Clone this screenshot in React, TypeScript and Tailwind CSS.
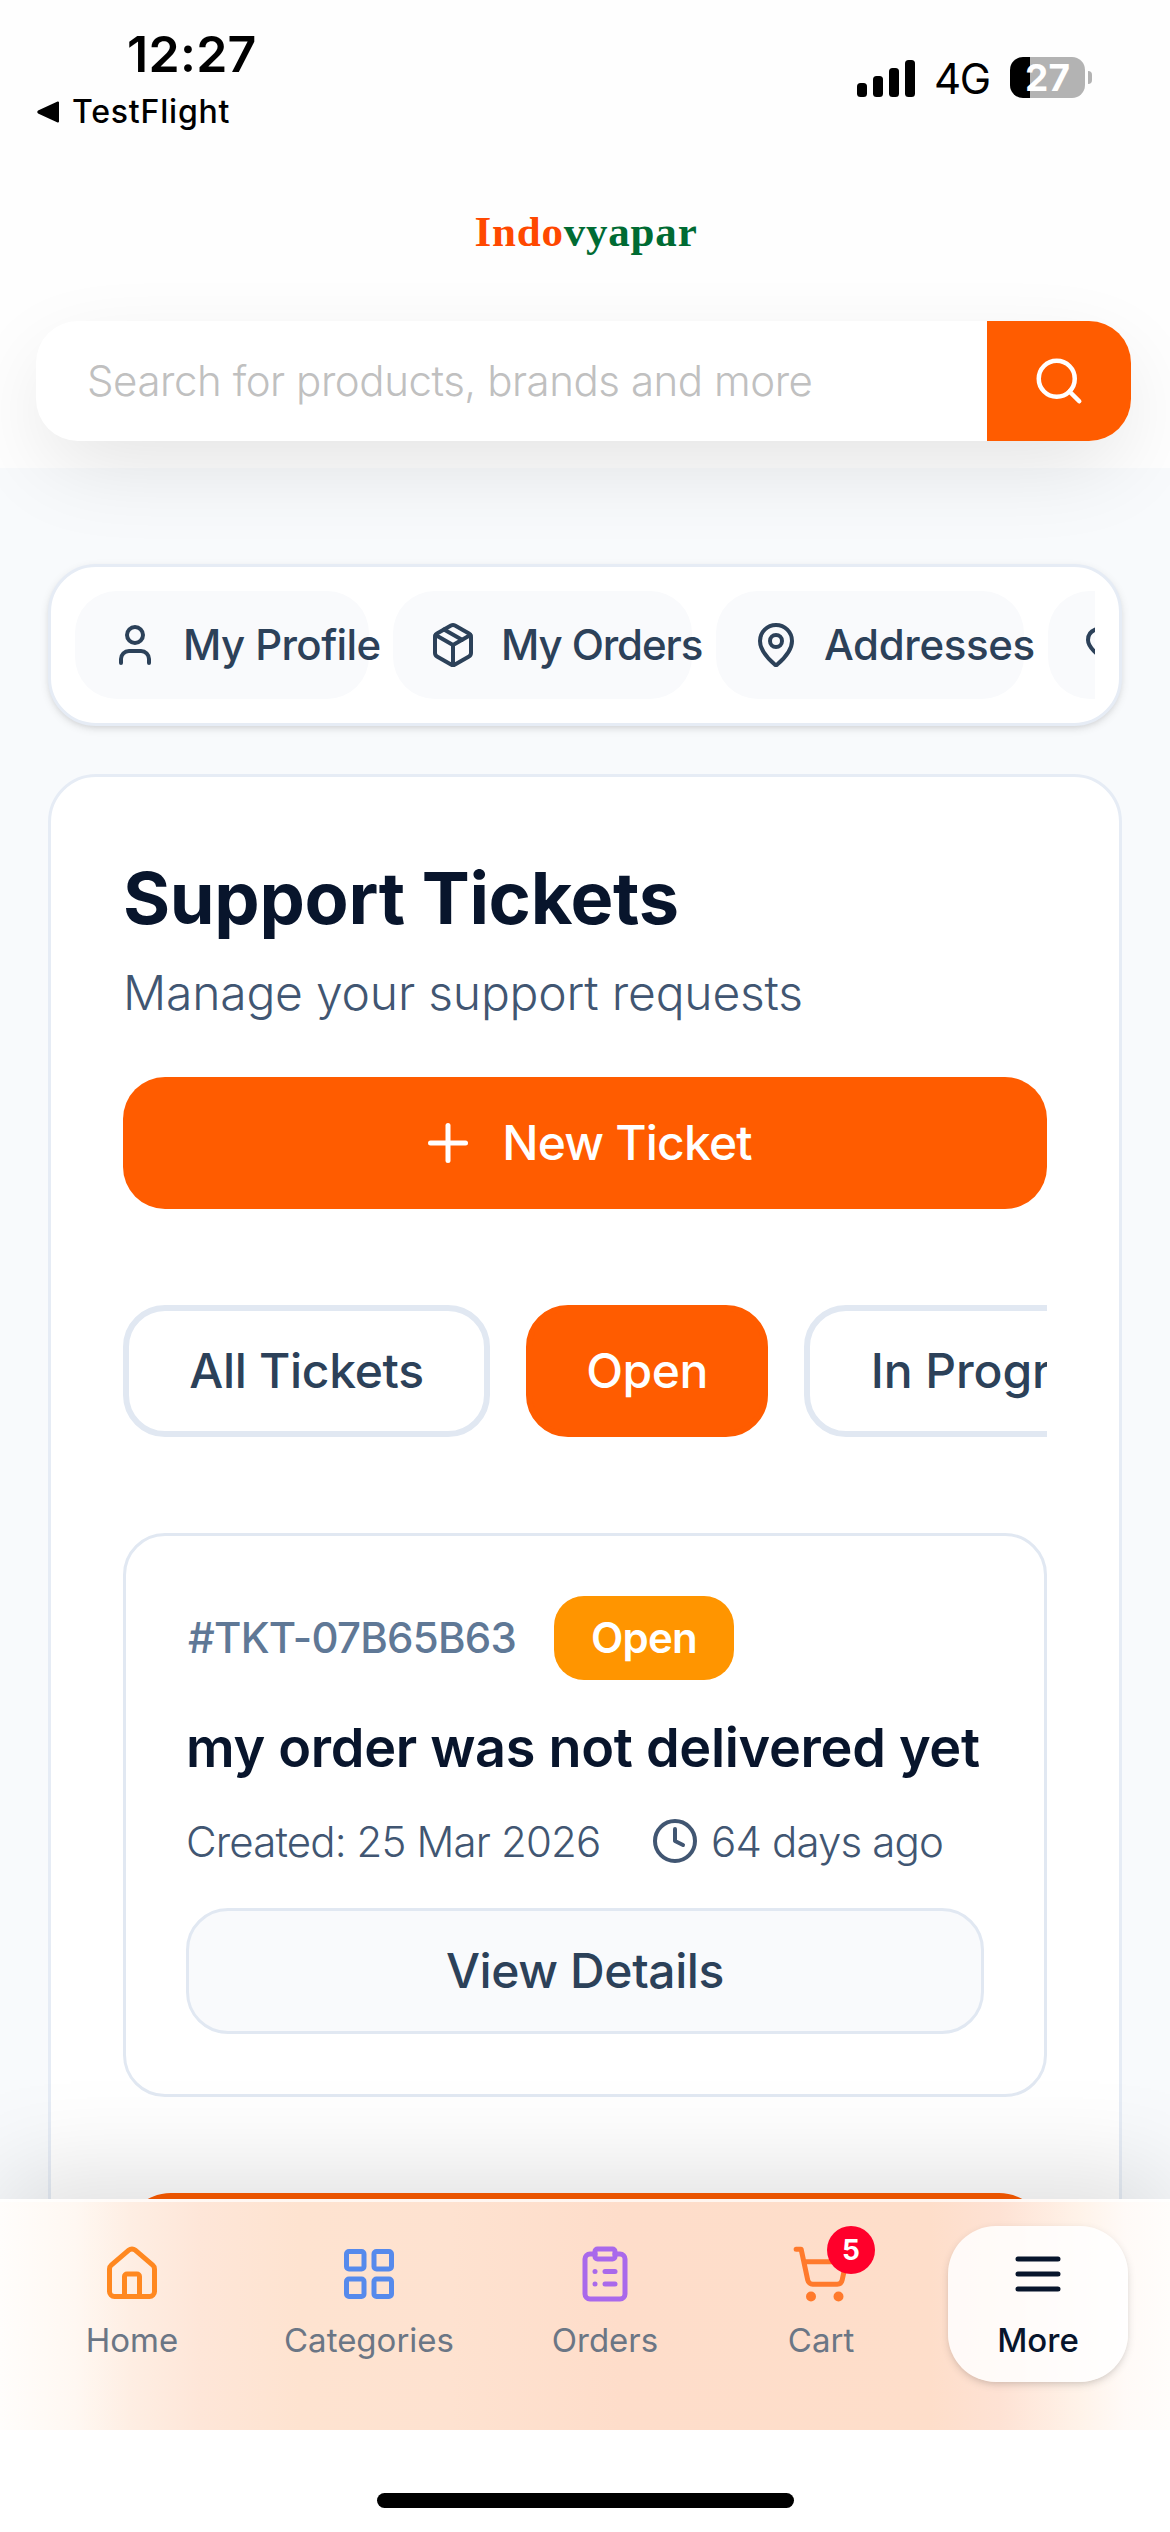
import { ReactNode } from 'react';
import {
  ClipboardList,
  Clock,
  Heart,
  House,
  LayoutGrid,
  MapPin,
  Package,
  Plus,
  Search,
  ShoppingCart,
  User,
} from 'lucide-react';

const ACCOUNT_LINKS = [
  { name: 'My Profile', icon: User, width: 'w-[294px]', tracking: 'tracking-[-0.6px]' },
  { name: 'My Orders', icon: Package, width: 'w-[299px]', tracking: 'tracking-[-1.1px]' },
  { name: 'Addresses', icon: MapPin, width: 'w-[308px]', tracking: 'tracking-[-0.35px]' },
  { name: 'Wishlist', icon: Heart, width: 'w-[270px]', tracking: 'tracking-[-0.6px]' },
];

const FILTERS = [
  { name: 'All Tickets', style: 'w-[367px] tracking-[-0.3px]', active: false },
  { name: 'Open', style: 'w-[242px] tracking-[-0.5px]', active: true },
  { name: 'In Progress', style: 'w-[392px] tracking-[-0.1px]', active: false },
];

function StatusBar() {
  return (
    <div className="flex h-[150px] justify-between text-black">
      <div className="pl-[37px] pt-[24px]">
        <div className="pl-[90px] text-[50px] font-semibold leading-[60px] tracking-[0.3px]">12:27</div>
        <div className="mt-[6px] flex items-center gap-[12px] text-[32px] font-medium leading-[44px] tracking-[0.8px]">
          <svg width="23" height="22" viewBox="0 0 23 22">
            <path d="M21 1.5v19L2 11.8q-1.5-.8 0-1.6z" fill="black" stroke="black" strokeWidth="2" strokeLinejoin="round" />
          </svg>
          <span>TestFlight</span>
        </div>
      </div>
      <div className="flex h-[41px] items-center pr-[78px] mt-[57px]">
        <svg width="59" height="38" viewBox="0 0 59 38">
          <rect x="0" y="24" width="10" height="14" rx="3.5" />
          <rect x="16" y="17" width="10" height="21" rx="3.5" />
          <rect x="32" y="9" width="10" height="29" rx="3.5" />
          <rect x="48" y="1" width="10" height="37" rx="3.5" />
        </svg>
        <span className="ml-[18px] mt-[2px] w-[76px] text-[42px] leading-[41px] tracking-[-1.5px]">4G</span>
        <div className="flex h-[41px] w-[75px] items-center justify-center rounded-[13px] bg-[linear-gradient(90deg,#000_27%,#b3b3b3_27%)] text-[37px] font-bold text-white">
          27
        </div>
        <div className="ml-[3px] h-[13px] w-[4px] rounded-r-[4px] bg-[#b3b3b3]" />
      </div>
    </div>
  );
}

function Header() {
  return (
    <header className="relative z-10 h-[468px] shrink-0 bg-[#fefefe]">
      <StatusBar />
      <div className="flex h-[171px] justify-center pt-[54px] pl-[2px] font-['Liberation_Serif',serif] text-[43px] font-bold leading-[56px] tracking-[0.8px]">
        <span className="text-[#ff4800]">Indo</span>
        <span className="text-[#006b33]">vyapar</span>
      </div>
      <div className="ml-[36px] flex h-[120px] w-[1095px] overflow-hidden rounded-[42px] bg-white shadow-[0_30px_90px_-12px_rgba(0,0,0,0.12)]">
        <div className="flex flex-1 items-center pb-[2px] pl-[51px] text-[42px] font-light tracking-[-0.45px] text-[#c0c0c0]">
          Search for products, brands and more
        </div>
        <button className="flex w-[144px] items-center justify-center bg-[#ff5c00] text-white">
          <Search size={54} strokeWidth={2} />
        </button>
      </div>
    </header>
  );
}

function AccountLinks() {
  return (
    <nav className="rounded-[48px] border-[3px] border-[#e6ecf5] bg-white p-[24px] shadow-[0_3px_9px_rgba(0,0,0,0.1),0_3px_6px_-3px_rgba(0,0,0,0.1)]">
      <div className="flex gap-[24px] overflow-hidden">
        {ACCOUNT_LINKS.map(({ name, icon: Icon, width, tracking }) => (
          <div
            key={name}
            className={`flex h-[108px] shrink-0 items-center gap-[24px] rounded-[42px] bg-[#f9fafc] pl-[36px] text-[42px] font-medium text-[#2c4159] ${width} ${tracking}`}
          >
            <Icon size={48} strokeWidth={2} className="shrink-0" />
            <span className="whitespace-nowrap pb-[2px]">{name}</span>
          </div>
        ))}
      </div>
    </nav>
  );
}

function TicketCard() {
  return (
    <article className="mt-[96px] h-[564px] rounded-[42px] border-[3px] border-[#e1e8f2] px-[60px] pt-[60px]">
      <div className="flex h-[84px] items-center">
        <span className="w-[368px] whitespace-nowrap pb-[2px] pl-[2px] text-[42px] font-medium tracking-[-0.75px] text-[#5f7896]">
          #TKT-07B65B63
        </span>
        <span className="flex h-[84px] w-[180px] items-center justify-center rounded-[30px] bg-[#ff9500] pb-[2px] text-[42px] font-semibold tracking-[-0.8px] text-white">
          Open
        </span>
      </div>
      <h2 className="mt-[30px] whitespace-nowrap text-[54px] font-semibold leading-[76px] tracking-[-0.3px] text-[#08152c]">
        my order was not delivered yet
      </h2>
      <div className="mt-[25px] flex h-[60px] items-center whitespace-nowrap text-[42px] font-light tracking-[-0.85px] text-[#415672]">
        <span className="w-[465px]">Created: 25 Mar 2026</span>
        <Clock size={48} strokeWidth={2} className="shrink-0" />
        <span className="ml-[12px]">64 days ago</span>
      </div>
      <button className="mt-[37px] flex h-[126px] w-full items-center justify-center rounded-[42px] border-[3px] border-[#e1e8f2] bg-[#f9fafc] text-[48px] font-medium tracking-[-0.4px] text-[#2c4159]">
        View Details
      </button>
    </article>
  );
}

function SupportTickets() {
  return (
    <section className="mt-[48px] rounded-[48px] border-[3px] border-[#e6ecf5] bg-white px-[72px] pt-[71px]">
      <h1 className="text-[72px] font-bold leading-[100px] tracking-[-0.3px] text-[#08152c]">Support Tickets</h1>
      <p className="mt-[9px] text-[48px] font-light leading-[72px] tracking-[-0.2px] text-[#415672]">
        Manage your support requests
      </p>
      <button className="mt-[48px] flex h-[132px] w-full items-center justify-center gap-[24px] rounded-[42px] bg-[#ff5c00] text-[48px] font-medium tracking-[-0.8px] text-white">
        <Plus size={60} strokeWidth={2} />
        New Ticket
      </button>

      {/* Status filters */}
      <div className="mt-[96px] flex gap-[36px] overflow-hidden">
        {FILTERS.map((filter) => (
          <button
            key={filter.name}
            className={`flex h-[132px] shrink-0 items-center justify-center rounded-[42px] border-[6px] text-[48px] font-medium ${filter.style} ${
              filter.active ? 'border-[#ff5c00] bg-[#ff5c00] text-white' : 'border-[#e1e8f2] bg-white text-[#2c4159]'
            }`}
          >
            {filter.name}
          </button>
        ))}
      </div>

      <TicketCard />

      <div className="mt-[96px] h-[132px] rounded-[48px] bg-[#ff5c00]" />
    </section>
  );
}

function NavItem({ label, left, children }: { label: string; left: string; children: ReactNode }) {
  return (
    <div className={`flex w-[180px] shrink-0 flex-col items-center pt-[18px] ${left}`}>
      {children}
      <span className="mt-[12px] text-[33px] leading-[48px] text-[#6b7685]">{label}</span>
    </div>
  );
}

function BottomNav() {
  return (
    <footer className="relative z-10 h-[333px] shrink-0 bg-white shadow-[0_-24px_96px_rgba(0,0,0,0.13)]">
      <div className="flex h-[231px] border-t-[3px] border-white/70 bg-[linear-gradient(90deg,#fffdfb_0px,#fff8f2_75px,#feeee3_130px,#fee6d8_200px,#fee3d0_300px,#fee2d0_450px,#feddca_620px,#fedeca_930px,#fee2d4_1000px,#fff3e9_1080px,#fffaf7_1125px,#fffdfb_1170px)] bg-origin-border pt-[24px]">
        <NavItem label="Home" left="ml-[42px]">
          <House size={60} className="text-[#ff8820]" />
        </NavItem>
        <NavItem label="Categories" left="ml-[57px]">
          <LayoutGrid size={60} className="text-[#568aec]" />
        </NavItem>
        <NavItem label="Orders" left="ml-[56px]">
          <ClipboardList size={60} className="text-[#a969eb]" />
        </NavItem>
        <NavItem label="Cart" left="ml-[36px]">
          <div className="relative">
            <ShoppingCart size={60} className="text-[#ff7a2c]" />
            <span className="absolute left-[36px] top-[-18px] flex size-[48px] items-center justify-center rounded-full bg-[#ff002b] text-[28px] font-bold text-white">
              5
            </span>
          </div>
        </NavItem>
        <div className="ml-[37px] flex h-[156px] w-[180px] shrink-0 flex-col items-center rounded-[48px] bg-white/85 pt-[18px] text-[#08152c] shadow-[0_3px_9px_rgba(0,0,0,0.12),0_3px_6px_-3px_rgba(0,0,0,0.1)]">
          <svg width="60" height="60" viewBox="0 0 24 24" fill="none" stroke="currentColor" strokeWidth="2" strokeLinecap="round">
            <path d="M4 6h16M4 12h16M4 18h16" />
          </svg>
          <span className="mt-[12px] text-[33px] font-medium leading-[48px]">More</span>
        </div>
      </div>
      {/* Home indicator */}
      <div className="mx-auto mt-[63px] h-[15px] w-[417px] rounded-full bg-black" />
    </footer>
  );
}

export default function App() {
  return (
    <div className="flex h-[2532px] w-[1170px] flex-col overflow-hidden bg-[#f8fafc] font-['Inter',sans-serif] antialiased">
      <Header />
      <main className="min-h-0 flex-1 overflow-hidden px-[48px] pt-[96px]">
        <AccountLinks />
        <SupportTickets />
      </main>
      <BottomNav />
    </div>
  );
}
